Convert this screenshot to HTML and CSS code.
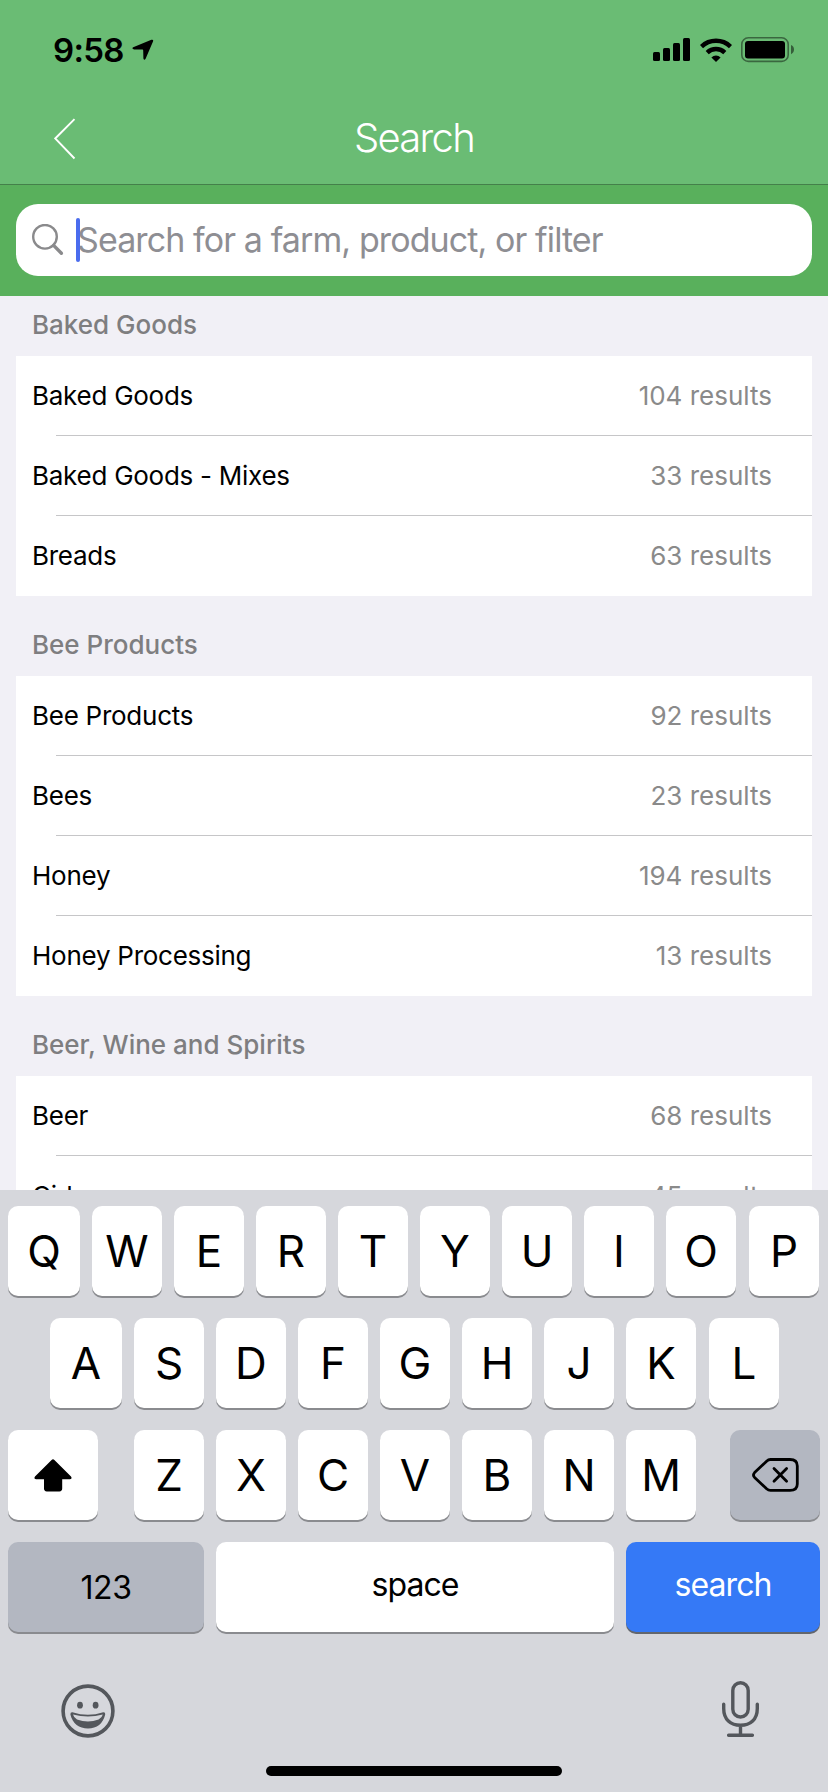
FILE: index.html
```
<!DOCTYPE html>
<html lang="en">
<head>
    <meta charset="UTF-8">
    <meta name="viewport" content="width=device-width, initial-scale=1.0">
    <title>Search</title>
    <link rel="stylesheet" href="styles.css">
</head>
<body>
    <header>
        <div class="status-bar">
            <div class="status-left">
                <span class="time">9:58</span>
                <svg width="22" height="22" viewBox="0 0 22 22">
                    <path d="M1.2 8.2 L19.4 0.8 Q21.8 0.2 21 2.6 L13.6 19.8 Q12.2 21.8 11.4 19.4 L11.2 11.4 Q11.2 10.6 10.4 10.6 L2 10.4 Q-0.8 9.6 1.2 8.2 Z"/>
                </svg>
            </div>
            <div class="status-right">
                <svg width="37" height="24" viewBox="0 0 37 24">
                    <rect x="0" y="14" width="7" height="9" rx="1.5"/>
                    <rect x="10" y="10" width="7" height="13" rx="1.5"/>
                    <rect x="20" y="5" width="7" height="18" rx="1.5"/>
                    <rect x="30" y="0" width="7" height="23" rx="1.5"/>
                </svg>
                <svg class="wifi" width="32" height="24" viewBox="0 0 32 24">
                    <g fill="none" stroke="#000" stroke-width="4.4">
                        <path d="M1.5 8.6 A21 21 0 0 1 30.5 8.6"/>
                        <path d="M7.2 14.6 A12.6 12.6 0 0 1 24.8 14.6"/>
                    </g>
                    <path d="M16 24 L11.4 19.4 A6.8 6.8 0 0 1 20.6 19.4 Z"/>
                </svg>
                <svg width="53" height="26" viewBox="0 0 53 26">
                    <rect x="0.8" y="0.8" width="46.4" height="23.6" rx="6.5" fill="none" stroke="#000" stroke-opacity="0.45" stroke-width="1.6"/>
                    <rect x="4" y="4" width="40" height="17.5" rx="3"/>
                    <path d="M50 8 Q53 9.4 53 12.6 Q53 15.8 50 17.2 Z" opacity="0.5"/>
                </svg>
            </div>
        </div>
        <div class="nav-bar">
            <svg class="back" width="22" height="42" viewBox="0 0 22 42">
                <path d="M20.5 1.2 L1.2 20.5 L20.5 40.5" fill="none" stroke="#fff" stroke-width="1.9"/>
            </svg>
            <h1>Search</h1>
        </div>
    </header>

    <div class="search-bar">
        <div class="search-field">
            <svg width="32" height="32" viewBox="0 0 32 32" fill="none" stroke="#8a8a8c">
                <circle cx="13" cy="12.8" r="11.8" stroke-width="2.4"/>
                <path d="M21.6 21.4 L29.4 29.2" stroke-width="3.4" stroke-linecap="round"/>
            </svg>
            <span class="cursor"></span>
            <span class="placeholder">Search for a farm, product, or filter</span>
        </div>
    </div>

    <main>
        <section>
            <h2>Baked Goods</h2>
            <ul>
                <li><span>Baked Goods</span><span class="count">104 results</span></li>
                <li><span>Baked Goods - Mixes</span><span class="count">33 results</span></li>
                <li><span>Breads</span><span class="count">63 results</span></li>
            </ul>
        </section>
        <section>
            <h2>Bee Products</h2>
            <ul>
                <li><span>Bee Products</span><span class="count">92 results</span></li>
                <li><span>Bees</span><span class="count">23 results</span></li>
                <li><span>Honey</span><span class="count">194 results</span></li>
                <li><span>Honey Processing</span><span class="count">13 results</span></li>
            </ul>
        </section>
        <section>
            <h2>Beer, Wine and Spirits</h2>
            <ul>
                <li><span>Beer</span><span class="count">68 results</span></li>
                <li><span>Cider</span><span class="count">45 results</span></li>
            </ul>
        </section>
    </main>

    <div class="keyboard">
        <div class="key-row">
            <div class="key">Q</div>
            <div class="key">W</div>
            <div class="key">E</div>
            <div class="key">R</div>
            <div class="key">T</div>
            <div class="key">Y</div>
            <div class="key">U</div>
            <div class="key">I</div>
            <div class="key">O</div>
            <div class="key">P</div>
        </div>
        <div class="key-row row-middle">
            <div class="key">A</div>
            <div class="key">S</div>
            <div class="key">D</div>
            <div class="key">F</div>
            <div class="key">G</div>
            <div class="key">H</div>
            <div class="key">J</div>
            <div class="key">K</div>
            <div class="key">L</div>
        </div>
        <div class="key-row">
            <div class="key shift">
                <svg width="38" height="33" viewBox="0 0 38 33">
                    <path d="M17.6 0.9 Q19 -0.3 20.4 0.9 L37 17.4 Q38.6 20 36 20.3 H28.2 V29.6 Q28.2 32.4 25.4 32.4 H12.8 Q10 32.4 10 29.6 V20.3 H2 Q-0.6 20 1 17.4 Z"/>
                </svg>
            </div>
            <div class="key">Z</div>
            <div class="key">X</div>
            <div class="key">C</div>
            <div class="key">V</div>
            <div class="key">B</div>
            <div class="key">N</div>
            <div class="key">M</div>
            <div class="key gray delete">
                <svg width="47" height="34" viewBox="0 0 47 34" fill="none" stroke="#000" stroke-width="2.8" stroke-linecap="round" stroke-linejoin="round">
                    <path d="M18.5 1.5 H38 Q45.3 1.5 45.3 8 V26 Q45.3 32.4 38 32.4 H18.5 Q16.4 32.4 14.6 30.8 L2.6 19.4 Q0.4 17 2.6 14.6 L14.6 3.2 Q16.4 1.5 18.5 1.5 Z"/>
                    <path d="M22 10.6 L34.6 23.2 M34.6 10.6 L22 23.2"/>
                </svg>
            </div>
        </div>
        <div class="key-row">
            <div class="key gray numbers">123</div>
            <div class="key space"><span>space</span></div>
            <div class="key blue"><span>search</span></div>
        </div>
        <div class="keyboard-footer">
            <svg width="54" height="54" viewBox="0 0 54 54">
                <circle cx="27" cy="27" r="24.9" fill="none" stroke="#54575c" stroke-width="3.6"/>
                <ellipse cx="19" cy="21.2" rx="2.9" ry="3.4" fill="#54575c"/>
                <ellipse cx="34.6" cy="21.2" rx="2.9" ry="3.4" fill="#54575c"/>
                <path d="M11.4 28.2 Q27 33.2 42.2 28.2 Q44.6 28 44.2 30.6 C42 39.6 36 44.6 27 44.6 C18 44.6 11.6 39.6 9.4 30.6 Q9.2 28 11.4 28.2 Z" fill="#54575c"/>
                <path d="M12 30.6 Q27 34.4 41.8 30.6 Q41 34 37.6 35.4 Q27 39.4 16 35.4 Q12.8 34 12 30.6 Z" fill="#d6d7dc"/>
            </svg>
            <svg class="mic" width="37" height="57" viewBox="0 0 37 57" fill="none" stroke="#54575c" stroke-width="3.4" stroke-linecap="round">
                <rect x="10.8" y="1.8" width="15.4" height="34.2" rx="7.7"/>
                <path d="M1.7 23.2 V27.4 C1.7 38.4 8.6 44.3 18.5 44.3 C28.4 44.3 35.3 38.4 35.3 27.4 V23.2 M18.5 44.3 V54.2 M6.6 54.2 H30.4"/>
            </svg>
        </div>
        <div class="home-indicator"></div>
    </div>
</body>
</html>
```
FILE: styles.css
```
* {
    box-sizing: border-box;
}
body {
    display: flex;
    flex-direction: column;
    width: 828px;
    height: 1792px;
    margin: 0;
    overflow: hidden;
    font-family: Inter, "Liberation Sans", sans-serif;
    background-color: #f1f0f6;
    color: #000;
}
svg {
    display: block;
    flex-shrink: 0;
}
header {
    height: 185px;
    background-color: #6abc74;
    border-bottom: 1px solid #44804a;
}
.status-bar {
    display: flex;
    justify-content: space-between;
    align-items: center;
    height: 88px;
    padding: 11px 34px 0 53px;
}
.status-left {
    display: flex;
    align-items: center;
    gap: 8px;
}
.time {
    font-size: 33px;
    font-weight: 600;
    line-height: 40px;
    letter-spacing: -0.7px;
}
.status-right {
    display: flex;
    align-items: center;
    gap: 9px;
}
.wifi {
    margin-left: 1px;
}
.nav-bar {
    display: grid;
    grid-template-columns: 80px 1fr 80px;
    align-items: center;
    height: 96px;
    padding-top: 5px;
}
.back {
    justify-self: end;
    margin-right: 4px;
}
h1 {
    margin: -2px 0 0;
    font-size: 40px;
    font-weight: 300;
    letter-spacing: -1.7px;
    text-align: center;
    color: #fff;
}
.search-bar {
    height: 111px;
    padding: 19px 16px 0;
    background-color: #59b05c;
}
.search-field {
    position: relative;
    display: flex;
    align-items: center;
    height: 72px;
    padding-left: 16px;
    border-radius: 22px;
    background-color: #fff;
}
.cursor {
    position: absolute;
    left: 60px;
    top: 14px;
    width: 4px;
    height: 44px;
    border-radius: 2px;
    background-color: #4a6cee;
}
.placeholder {
    margin: 0 0 2px 13px;
    font-size: 34px;
    letter-spacing: -0.9px;
    white-space: nowrap;
    color: #8e8e93;
}
main {
    height: 894px;
    overflow: hidden;
}
section {
    padding: 0 16px;
}
section:first-child {
    margin-top: -20px;
}
h2 {
    height: 80px;
    margin: 0;
    padding: 17px 16px 0;
    font-size: 26px;
    font-weight: 500;
    line-height: 63px;
    color: #7e7e80;
}
ul {
    margin: 0;
    padding: 0;
    list-style: none;
    background-color: #fff;
}
li {
    display: flex;
    justify-content: space-between;
    align-items: center;
    height: 80px;
    padding: 0 40px 1px 16px;
    font-size: 26px;
    letter-spacing: -0.26px;
    background: linear-gradient(#c6c6c8, #c6c6c8) 40px 79px / 100% 1px no-repeat;
}
li:last-child {
    background: none;
}
.count {
    letter-spacing: 0;
    color: #8a8a8a;
}
.keyboard {
    height: 602px;
    padding-top: 16px;
    background-color: #d6d7dc;
}
.key-row {
    display: flex;
    gap: 12px;
    height: 90px;
    margin-bottom: 22px;
    padding: 0 8px;
}
.row-middle {
    padding: 0 49px 0 50px;
}
.key {
    display: flex;
    flex: 0 0 70px;
    justify-content: center;
    align-items: center;
    border-radius: 10px;
    background-color: #fff;
    box-shadow: 0 2px 0 #8a8b8f;
    font-size: 44px;
}
.key:first-child {
    flex-basis: 72px;
}
.key:last-child {
    margin-left: 1px;
}
.key.shift {
    flex-basis: 90px;
    margin-right: 24px;
}
.key.delete {
    flex-basis: 90px;
    margin-left: 22px;
}
.gray {
    background-color: #b3b7c1;
}
.key.numbers {
    flex-basis: 196px;
    font-size: 32px;
    letter-spacing: -0.4px;
}
.key.space {
    flex-basis: 398px;
}
.space,
.blue {
    font-size: 32px;
    letter-spacing: -0.9px;
}
.space span,
.blue span {
    margin-bottom: 5px;
}
.key.blue {
    flex-basis: 194px;
    margin-left: 0;
    background-color: #3579f6;
    box-shadow: 0 2px 0 #63666d;
    color: #fff;
}
.keyboard-footer {
    display: flex;
    justify-content: space-between;
    align-items: center;
    height: 112px;
    padding: 2px 69px 0 61px;
}
.mic {
    margin-bottom: 4px;
}
.home-indicator {
    width: 296px;
    height: 10px;
    margin: 0 auto;
    border-radius: 5px;
    background-color: #000;
}
```
